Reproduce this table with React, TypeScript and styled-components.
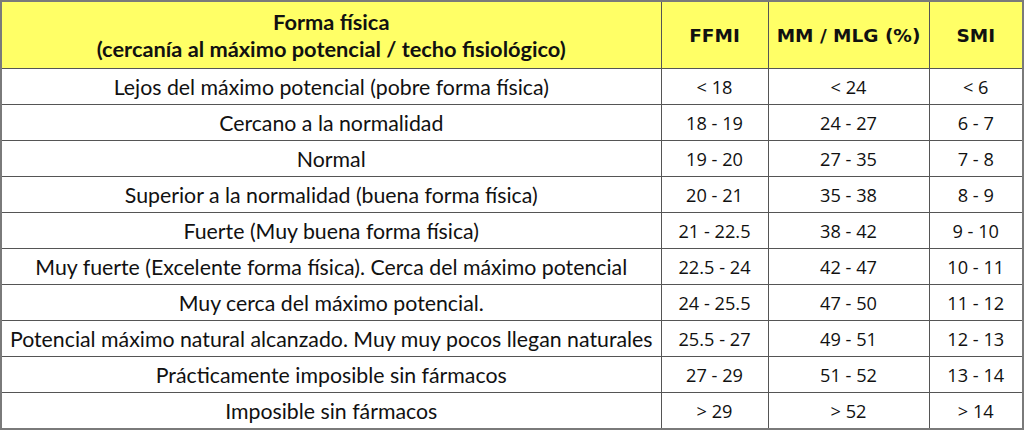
import React from "react";
import styled, { createGlobalStyle } from "styled-components";

const Global = createGlobalStyle`
  html, body { margin: 0; padding: 0; background: #ffffff; }
`;

const Table = styled.table`
  width: 1022px;
  table-layout: fixed;
  border-collapse: collapse;
  border: 2px solid #7a7a7a;
  color: #111;
`;

const HeadCell = styled.th<{ $wide?: boolean }>`
  height: 66px;
  padding: 0 2px;
  background: #ffff66;
  border: 1px solid #555;
  text-align: center;
  vertical-align: middle;
  white-space: nowrap;
  font-family: ${(p) => (p.$wide ? '"Lato", sans-serif' : '"DejaVu Sans", sans-serif')};
  font-weight: 700;
  font-size: ${(p) => (p.$wide ? "21.8px" : "18.5px")};
  line-height: 27px;
`;

const Cell = styled.td<{ $label?: boolean }>`
  height: 35px;
  padding: 0 2px;
  border: 1px solid #555;
  text-align: center;
  vertical-align: middle;
  white-space: nowrap;
  font-family: ${(p) => (p.$label ? '"Lato", sans-serif' : '"Open Sans", sans-serif')};
  font-size: ${(p) => (p.$label ? "21.3px" : "18.2px")};
  line-height: 24px;
`;

const rows: [string, string, string, string][] = [
  ["Lejos del máximo potencial (pobre forma física)", "< 18", "< 24", "< 6"],
  ["Cercano a la normalidad", "18 - 19", "24 - 27", "6 - 7"],
  ["Normal", "19 - 20", "27 - 35", "7 - 8"],
  ["Superior a la normalidad (buena forma física)", "20 - 21", "35 - 38", "8 - 9"],
  ["Fuerte (Muy buena forma física)", "21 - 22.5", "38 - 42", "9 - 10"],
  ["Muy fuerte (Excelente forma física). Cerca del máximo potencial", "22.5 - 24", "42 - 47", "10 - 11"],
  ["Muy cerca del máximo potencial.", "24 - 25.5", "47 - 50", "11 - 12"],
  ["Potencial máximo natural alcanzado. Muy muy pocos llegan naturales", "25.5 - 27", "49 - 51", "12 - 13"],
  ["Prácticamente imposible sin fármacos", "27 - 29", "51 - 52", "13 - 14"],
  ["Imposible sin fármacos", "> 29", "> 52", "> 14"],
];

export default function App() {
  return (
    <>
      <Global />
      <Table>
        <colgroup>
          <col style={{ width: 660 }} />
          <col style={{ width: 107 }} />
          <col style={{ width: 161 }} />
          <col style={{ width: 94 }} />
        </colgroup>
        <thead>
          <tr>
            <HeadCell $wide>
              Forma física
              <br />
              (cercanía al máximo potencial / techo fisiológico)
            </HeadCell>
            <HeadCell>FFMI</HeadCell>
            <HeadCell>MM / MLG (%)</HeadCell>
            <HeadCell>SMI</HeadCell>
          </tr>
        </thead>
        <tbody>
          {rows.map((r) => (
            <tr key={r[0]}>
              <Cell $label>{r[0]}</Cell>
              <Cell>{r[1]}</Cell>
              <Cell>{r[2]}</Cell>
              <Cell>{r[3]}</Cell>
            </tr>
          ))}
        </tbody>
      </Table>
    </>
  );
}
